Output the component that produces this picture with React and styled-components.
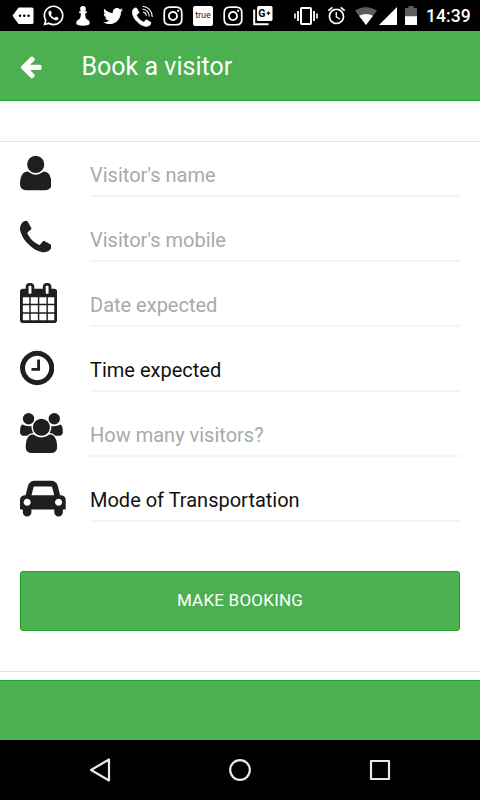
import React from "react";
import styled, { createGlobalStyle } from "styled-components";
import { FaInstagram, FaTwitter, FaWhatsapp } from "react-icons/fa";
import { MdAlarm } from "react-icons/md";

const PHONE_PATH =
    "M1600 1240q0 27-10 70.5t-21 68.5q-21 50-122 106-94 51-186 51-27 0-53-3.5t-57.5-12.5-47-14.5-55.5-20.5-49-18q-98-35-175-83-127-79-264-216t-216-264q-48-77-83-175-3-9-18-49t-20.5-55.5-14.5-47-12.5-57.5-3.5-53q0-92 51-186 56-101 106-122 25-11 68.5-21t70.5-10q14 0 21 3 18 6 53 76 11 19 30 54t35 63.5 31 53.5q3 4 17.5 25t21.5 35.5 7 28.5q0 20-28.5 50t-62 55-62 53-28.5 46q0 9 5 22.5t8.5 20.5 14 24 11.5 19q76 137 174 235t235 174q2 1 19 11.5t24 14 20.5 8.5 22.5 5q18 0 46-28.5t53-62 55-62 50-28.5q14 0 28.5 7t35.5 21.5 25 17.5q25 15 53.5 31t63.5 35 54 30q70 35 76 53 3 7 3 21z";

// every path sits on a 1792 unit high grid
const icons = {
    user: {
        left: 192,
        width: 1408,
        path: "M1600 1405q0 120-73 189.5t-194 69.5h-874q-121 0-194-69.5t-73-189.5q0-53 3.5-103.5t14-109 26.5-108.5 43-97.5 62-81 85.5-53.5 111.5-20q9 0 42 21.5t74.5 48 108 48 133.5 21.5 133.5-21.5 108-48 74.5-48 42-21.5q61 0 111.5 20t85.5 53.5 62 81 43 97.5 26.5 108.5 14 109 3.5 103.5zm-320-893q0 159-112.5 271.5t-271.5 112.5-271.5-112.5-112.5-271.5 112.5-271.5 271.5-112.5 271.5 112.5 112.5 271.5z",
    },
    phone: { left: 192, width: 1408, path: PHONE_PATH },
    calendar: {
        left: 64,
        width: 1664,
        path: "M192 1664h288v-288h-288v288zm352 0h320v-288h-320v288zm-352-352h288v-320h-288v320zm352 0h320v-320h-320v320zm-352-384h288v-288h-288v288zm736 736h320v-288h-320v288zm-384-736h320v-288h-320v288zm768 736h288v-288h-288v288zm-384-352h320v-320h-320v320zm-352-864v-288q0-13-9.5-22.5t-22.5-9.5h-64q-13 0-22.5 9.5t-9.5 22.5v288q0 13 9.5 22.5t22.5 9.5h64q13 0 22.5-9.5t9.5-22.5zm736 864h288v-320h-288v320zm-384-384h320v-288h-320v288zm384 0h288v-288h-288v288zm32-480v-288q0-13-9.5-22.5t-22.5-9.5h-64q-13 0-22.5 9.5t-9.5 22.5v288q0 13 9.5 22.5t22.5 9.5h64q13 0 22.5-9.5t9.5-22.5zm384-64v1280q0 52-38 90t-90 38h-1408q-52 0-90-38t-38-90v-1280q0-52 38-90t90-38h128v-96q0-66 47-113t113-47h64q66 0 113 47t47 113v96h384v-96q0-66 47-113t113-47h64q66 0 113 47t47 113v96h128q52 0 90 38t38 90z",
    },
    clock: {
        left: 128,
        width: 1536,
        path: "M1024 544v448q0 14-9 23t-23 9h-320q-14 0-23-9t-9-23v-64q0-14 9-23t23-9h224v-352q0-14 9-23t23-9h64q14 0 23 9t9 23zm416 352q0-148-73-273t-198-198-273-73-273 73-198 198-73 273 73 273 198 198 273 73 273-73 198-198 73-273zm224 0q0 209-103 385.5t-279.5 279.5-385.5 103-385.5-103-279.5-279.5-103-385.5 103-385.5 279.5-279.5 385.5-103 385.5 103 279.5 279.5 103 385.5z",
    },
    users: {
        left: 64,
        width: 1920,
        path: "M657 896q-162 5-265 128h-134q-82 0-138-40.5t-56-118.5q0-353 124-353 6 0 43.5 21t97.5 42.5 119 21.5q67 0 133-23-5 37-5 66 0 139 81 256zm1071 637q0 120-73 189.5t-194 69.5h-874q-121 0-194-69.5t-73-189.5q0-53 3.5-103.5t14-109 26.5-108.5 43-97.5 62-81 85.5-53.5 111.5-20q10 0 43 21.5t73 48 107 48 135 21.5 135-21.5 107-48 73-48 43-21.5q61 0 111.5 20t85.5 53.5 62 81 43 97.5 26.5 108.5 14 109 3.5 103.5zm-1024-1277q0 106-75 181t-181 75-181-75-75-181 75-181 181-75 181 75 75 181zm704 384q0 159-112.5 271.5t-271.5 112.5-271.5-112.5-112.5-271.5 112.5-271.5 271.5-112.5 271.5 112.5 112.5 271.5zm576 225q0 78-56 118.5t-138 40.5h-134q-103-123-265-128 81-117 81-256 0-29-5-66 66 23 133 23 59 0 119-21.5t97.5-42.5 43.5-21q124 0 124 353zm-128-609q0 106-75 181t-181 75-181-75-75-181 75-181 181-75 181 75 75 181z",
    },
    car: {
        left: 0,
        width: 2048,
        path: "M480 1088q0-66-47-113t-113-47-113 47-47 113 47 113 113 47 113-47 47-113zm36-320h1016l-89-357q-2-8-14-17.5t-21-9.5h-768q-9 0-21 9.5t-14 17.5zm1372 320q0-66-47-113t-113-47-113 47-47 113 47 113 113 47 113-47 47-113zm160-96v384q0 14-9 23t-23 9h-96v128q0 80-56 136t-136 56-136-56-56-136v-128h-1024v128q0 80-56 136t-136 56-136-56-56-136v-128h-96q-14 0-23-9t-9-23v-384q0-93 65.5-158.5t158.5-65.5h28l105-419q23-94 104-157.5t179-63.5h768q98 0 179 63.5t104 157.5l105 419h28q93 0 158.5 65.5t65.5 158.5z",
    },
    arrow: {
        left: 192,
        width: 1472,
        path: "M1664 896v128q0 53-32.5 90.5t-84.5 37.5h-704l293 294q38 36 38 90t-38 90l-75 76q-37 37-90 37-52 0-91-37l-651-652q-37-37-37-90 0-52 37-91l651-650q38-38 91-38 52 0 90 38l75 74q38 38 38 91t-38 91l-293 293h704q52 0 84.5 37.5t32.5 90.5z",
    },
};

const fields = [
    { label: "Visitor's name", icon: "user" },
    { label: "Visitor's mobile", icon: "phone" },
    { label: "Date expected", icon: "calendar" },
    { label: "Time expected", icon: "clock", dark: true },
    { label: "How many visitors?", icon: "users" },
    { label: "Mode of Transportation", icon: "car", dark: true },
];

const Icon = ({ name, size }) => {
    const { left, width, path } = icons[name];
    return (
        <svg
            width={(width / 1792) * size}
            height={size}
            viewBox={`${left} 0 ${width} 1792`}
            fill="currentColor"
        >
            <path d={path} />
        </svg>
    );
};

const MessageIcon = () => (
    <svg width="22" height="18" viewBox="0 0 22 18">
        <path d="M6.5 0.5H20Q21.5 0.5 21.5 2V15.5Q21.5 17 20 17H6.5L0.5 8.8Z" fill="#fff" />
        <circle cx="8" cy="8.8" r="1.3" />
        <circle cx="12.3" cy="8.8" r="1.3" />
        <circle cx="16.6" cy="8.8" r="1.3" />
    </svg>
);

const PawnIcon = () => (
    <svg width="14" height="20" viewBox="0 0 14 20" fill="#fff">
        <circle cx="7" cy="3" r="2.9" />
        <rect x="3" y="5.3" width="8" height="2" rx="1" />
        <path d="M5 7H9Q9 11.5 11 14H3Q5 11.5 5 7Z" />
        <path d="M3 13.2H11Q13.8 14.5 13.8 17Q13.8 19.8 7 19.8Q0.2 19.8 0.2 17Q0.2 14.5 3 13.2Z" />
    </svg>
);

const CallIcon = () => (
    <svg width="22" height="22" viewBox="0 0 22 22" fill="none" stroke="#fff">
        <path
            d={PHONE_PATH}
            transform="translate(-2.3 1.2) scale(0.0132)"
            fill="#fff"
            stroke="#fff"
            strokeWidth="50"
        />
        <path d="M10.5 1.2Q19.5 2.2 20.3 12M10.5 4Q16.8 5 17.3 11.5M11 7Q14 7.5 14.3 10.7" strokeWidth="1.1" />
    </svg>
);

const GooglePlusIcon = () => (
    <svg width="20" height="21" viewBox="0 0 20 21">
        <path d="M1.2 4.5V19.3H15.5" fill="none" stroke="#fff" strokeWidth="2" />
        <rect x="4" y="1" width="15.5" height="15" rx="1.5" fill="#fff" />
        <text x="5.2" y="12.2" fontFamily="Roboto, sans-serif" fontSize="10.5" fontWeight="700">
            G
        </text>
        <path d="M13.6 8.2h3.6M15.4 6.4v3.6" stroke="#000" strokeWidth="1.2" />
    </svg>
);

const VibrateIcon = () => (
    <svg width="24" height="18" viewBox="0 0 24 18" stroke="#fff" fill="none">
        <rect x="7" y="1" width="10" height="16" rx="0.8" strokeWidth="2" />
        <path d="M4 4V14M20 4V14" strokeWidth="1.8" />
        <path d="M1 6.5V11.5M23 6.5V11.5" strokeWidth="1.6" />
    </svg>
);

const WifiIcon = () => (
    <svg width="22" height="18" viewBox="0 0 22 18">
        <path d="M0 3.5Q11 -3.5 22 3.5L11 18Z" fill="#5c5c5c" />
        <path d="M4 8.8Q11 5 18 8.8L11 18Z" fill="#fff" />
    </svg>
);

const SignalIcon = () => (
    <svg width="18" height="18" viewBox="0 0 18 18">
        <path d="M18 0V18H0Z" fill="#fff" />
    </svg>
);

const BatteryIcon = () => (
    <svg width="12" height="19" viewBox="0 0 12 19">
        <path d="M3.5 0H8.5V2H12V10.5H0V2H3.5Z" fill="#5c5c5c" />
        <path d="M0 10.2H12V19H0Z" fill="#fff" />
    </svg>
);

const StatusBar = () => (
    <StatusContainer>
        <Notifications>
            <MessageIcon />
            <FaWhatsapp size={23} />
            <PawnIcon />
            <FaTwitter size={20} />
            <CallIcon />
            <FaInstagram size={22} />
            <TrueBadge>true</TrueBadge>
            <FaInstagram size={22} />
            <GooglePlusIcon />
        </Notifications>
        <SystemIcons>
            <VibrateIcon />
            <MdAlarm size={21} />
            <Network>
                <WifiIcon />
                <SignalIcon />
            </Network>
            <BatteryIcon />
            <Clock>14:39</Clock>
        </SystemIcons>
    </StatusContainer>
);

const App = () => {
    return (
        <Screen>
            <GlobalStyle />
            <StatusBar />
            <Header>
                <Icon name="arrow" size={25} />
                <Title>Book a visitor</Title>
            </Header>
            <Form>
                <FieldList>
                    {fields.map((field) => (
                        <Field key={field.label}>
                            <FieldIcon>
                                <Icon name={field.icon} size={40} />
                            </FieldIcon>
                            <FieldLabel $dark={field.dark}>{field.label}</FieldLabel>
                        </Field>
                    ))}
                </FieldList>
                <BookButton>MAKE BOOKING</BookButton>
            </Form>
            <Footer />
            <NavigationBar>
                <svg width="24" height="26" viewBox="0 0 24 26">
                    <path d="M3 13L21 2.5V23.5Z" />
                </svg>
                <svg width="24" height="26" viewBox="0 0 24 26">
                    <circle cx="12" cy="13" r="9.8" />
                </svg>
                <svg width="24" height="26" viewBox="0 0 24 26">
                    <rect x="3" y="4" width="18" height="18" />
                </svg>
            </NavigationBar>
        </Screen>
    );
};

export default App;

const GlobalStyle = createGlobalStyle`
    * {
        box-sizing: border-box;
    }

    body {
        margin: 0;
        background-color: #fff;
        font-family: Roboto, sans-serif;
    }

    svg {
        display: block;
        flex-shrink: 0;
    }
`;

const Screen = styled.div`
    display: flex;
    flex-direction: column;
    width: 480px;
    height: 800px;
    overflow: hidden;
`;

const StatusContainer = styled.div`
    display: flex;
    justify-content: space-between;
    height: 31px;
    padding: 0 9px 0 8px;
    background-color: #000;
    color: #fff;
`;

const Notifications = styled.div`
    display: grid;
    grid-template-columns: repeat(9, 30px);
    align-items: center;
    justify-items: center;
`;

const TrueBadge = styled.span`
    width: 20px;
    height: 20px;
    border-radius: 2px;
    background-color: #fff;
    color: #222;
    font-size: 9px;
    line-height: 19px;
    text-align: center;
`;

const SystemIcons = styled.div`
    display: flex;
    align-items: center;
    gap: 8px;
`;

const Network = styled.div`
    display: flex;
    gap: 2px;
`;

const Clock = styled.span`
    width: 46px;
    padding: 2px 0 0 1px;
    font-size: 17.6px;
    font-weight: 500;
    line-height: 31px;
    white-space: nowrap;
`;

const Header = styled.header`
    display: flex;
    align-items: center;
    gap: 40px;
    height: 70px;
    padding: 1px 0 0 21px;
    border-bottom: 1px solid #22a127;
    background-color: #4caf50;
    color: #fff;
`;

const Title = styled.h1`
    margin: 0;
    padding-top: 1px;
    font-size: 25px;
    font-weight: 400;
    line-height: 30px;
`;

const Form = styled.main`
    height: 531px;
    margin-top: 40px;
    border-top: 1px solid #e3e3e3;
    border-bottom: 1px solid #e3e3e3;
`;

const FieldList = styled.div`
    display: flex;
    flex-direction: column;
    gap: 10px;
    padding: 0 20px;
`;

const Field = styled.div`
    display: flex;
    height: 55px;
`;

const FieldIcon = styled.div`
    width: 70px;
    padding-top: 11px;
    color: #1f1f1f;
`;

const FieldLabel = styled.div`
    flex: 1;
    padding-top: 12px;
    border-bottom: 2px solid #f4f4f4;
    color: ${(props) => (props.$dark ? "#111" : "#a9a9a9")};
    font-size: 20px;
    line-height: 42px;
`;

const BookButton = styled.button`
    display: block;
    width: 440px;
    height: 60px;
    margin: 49px 20px 0;
    padding: 0 0 2px;
    border: 1px solid #22a127;
    border-radius: 3px;
    background-color: #4caf50;
    color: #fff;
    font-family: inherit;
    font-size: 17px;
    letter-spacing: 0.22px;
`;

const Footer = styled.footer`
    height: 60px;
    margin-top: 8px;
    border-top: 1px solid #22a127;
    background-color: #4caf50;
`;

const NavigationBar = styled.nav`
    display: flex;
    align-items: center;
    justify-content: space-between;
    height: 60px;
    padding: 0 88px;
    background-color: #000;

    svg {
        fill: none;
        stroke: #e8e8e8;
        stroke-width: 2.2;
        stroke-linejoin: round;
    }
`;
